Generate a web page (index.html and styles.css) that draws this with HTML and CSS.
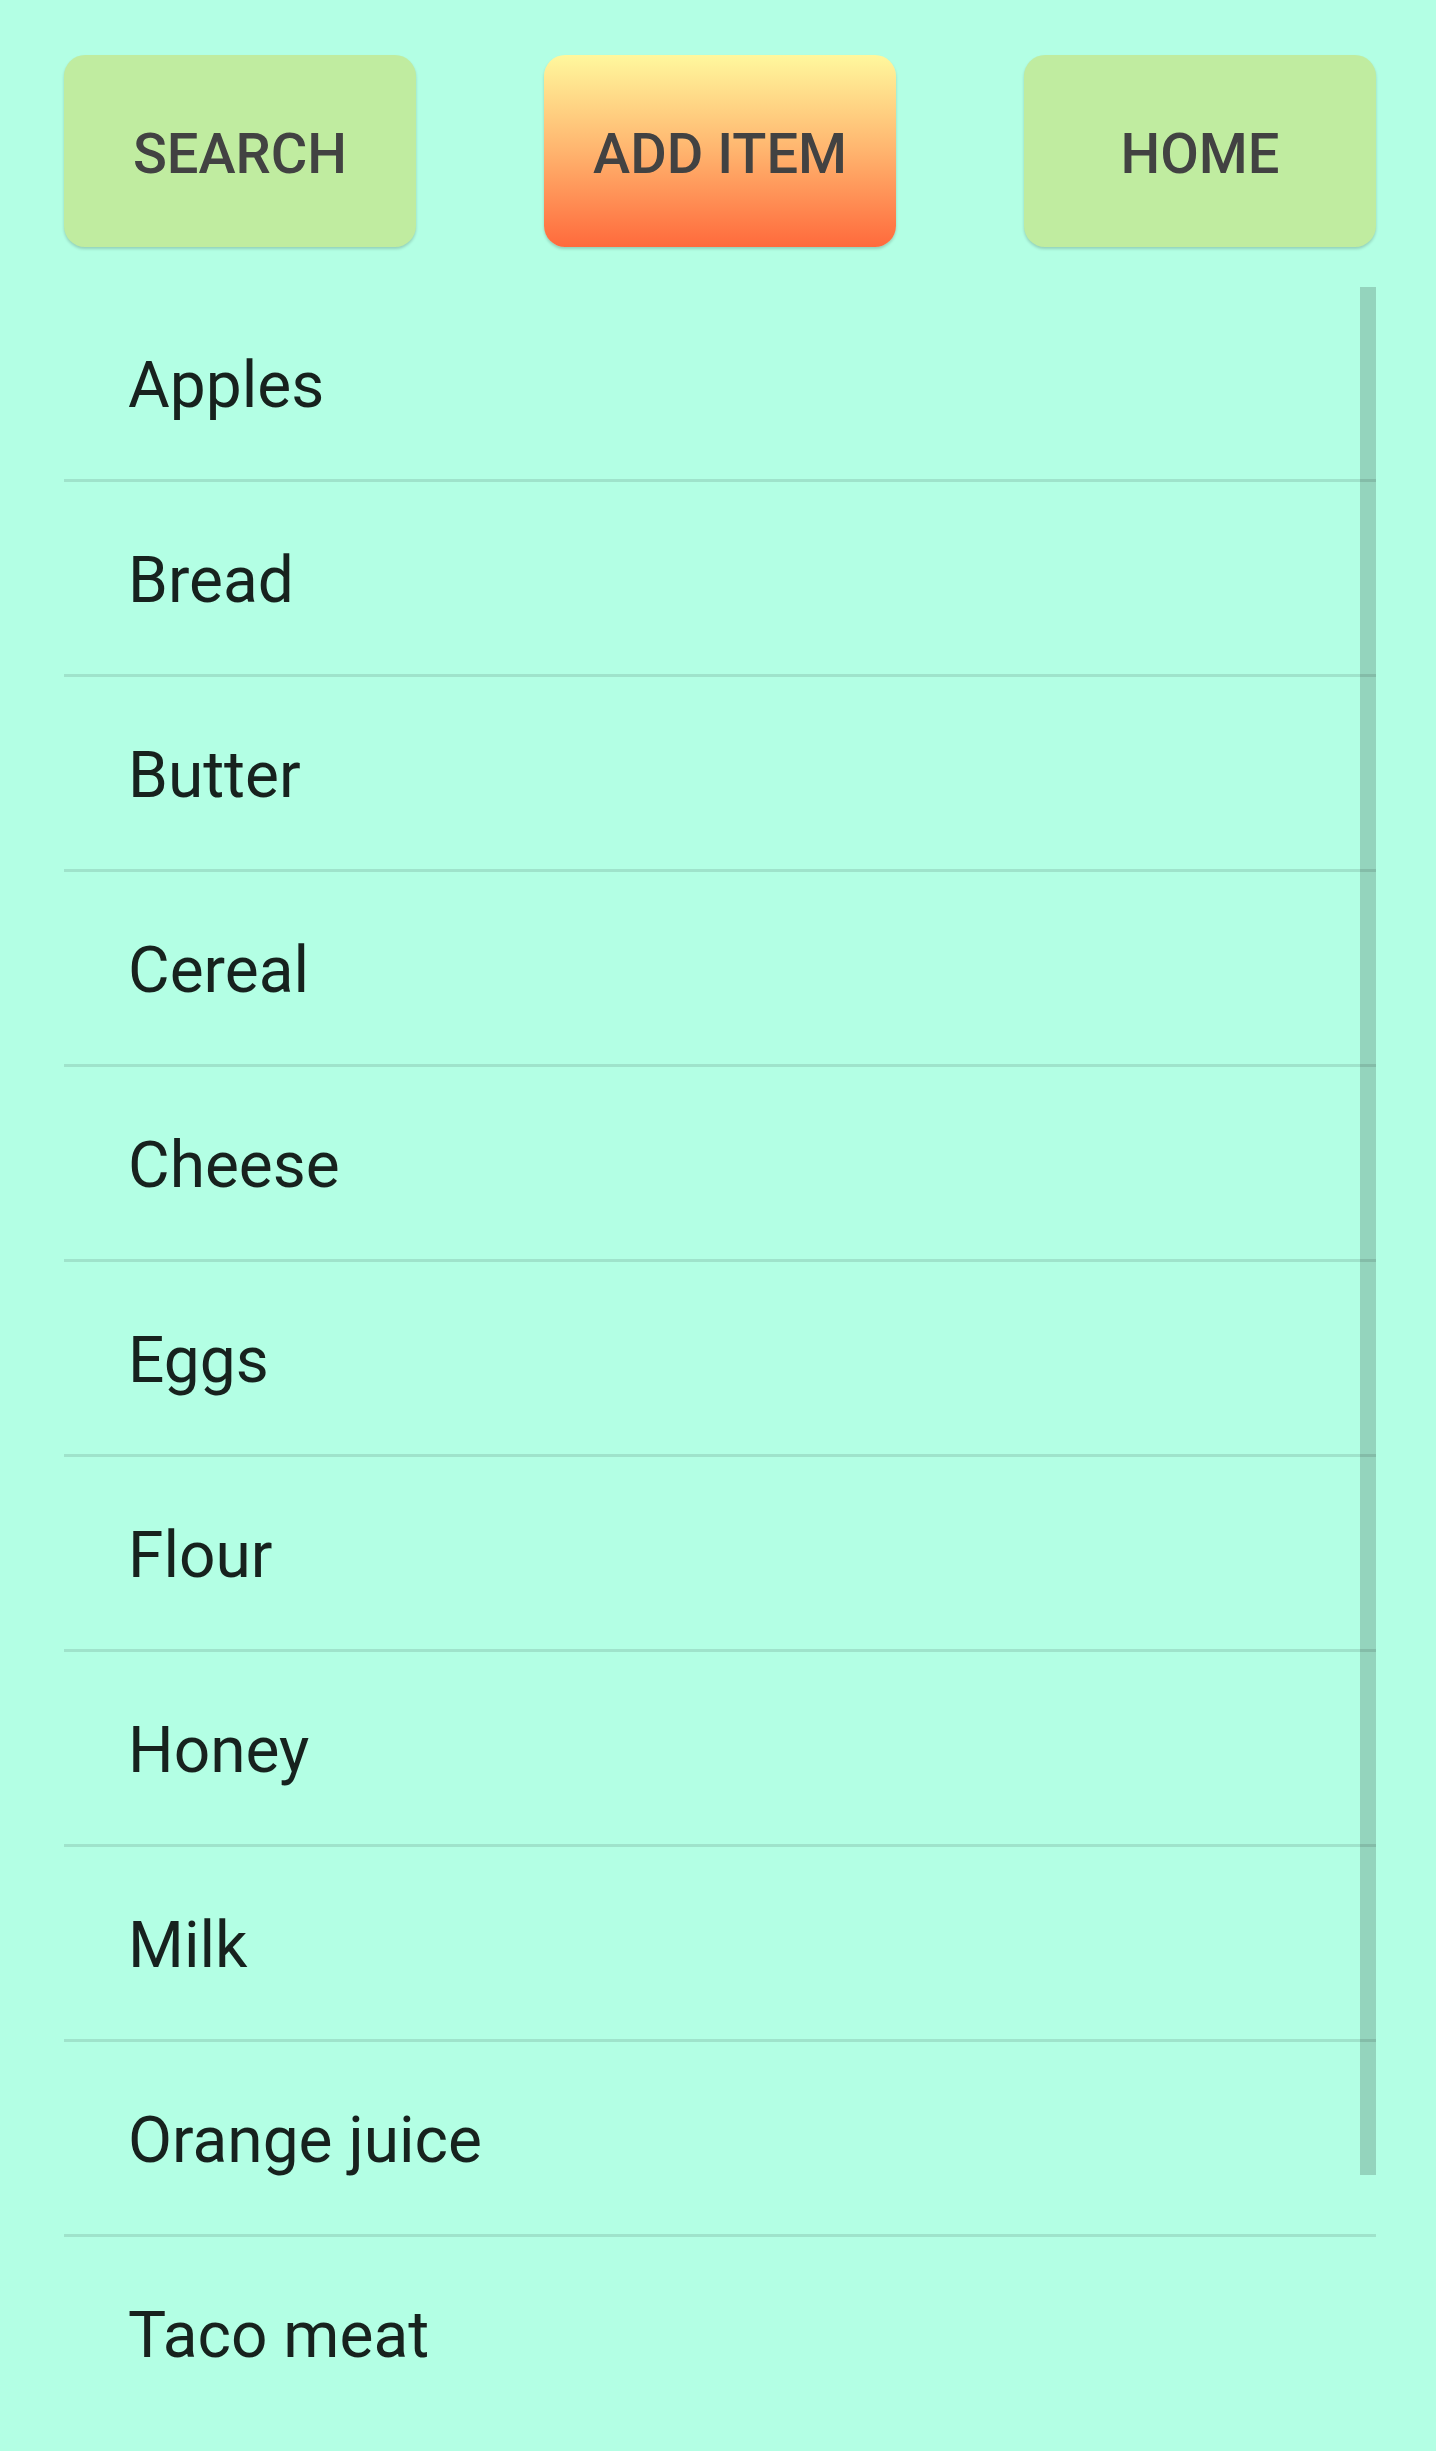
FILE: index.html
```html
<!DOCTYPE html>
<html>
<head>
<meta charset="utf-8">
<link rel="stylesheet" href="styles.css">
</head>
<body>
<div class="app">
  <div class="toolbar">
    <button class="btn btn-green">SEARCH</button>
    <button class="btn btn-orange">ADD ITEM</button>
    <button class="btn btn-green">HOME</button>
  </div>
  <div class="list">
    <div class="item">Apples</div>
    <div class="item">Bread</div>
    <div class="item">Butter</div>
    <div class="item">Cereal</div>
    <div class="item">Cheese</div>
    <div class="item">Eggs</div>
    <div class="item">Flour</div>
    <div class="item">Honey</div>
    <div class="item">Milk</div>
    <div class="item">Orange juice</div>
    <div class="item last">Taco meat</div>
    <div class="scrollbar"></div>
  </div>
</div>
</body>
</html>
```

FILE: styles.css
```css
html, body {
  margin: 0;
  padding: 0;
  background: #ffffff;
}
.app {
  background: #b3ffe4;
  height: 2451px;
  padding: 55px 60px 0 64px;
  box-sizing: border-box;
  font-family: Roboto, "Liberation Sans", sans-serif;
}
.toolbar {
  display: flex;
  justify-content: space-between;
}
.btn {
  width: 352px;
  height: 192px;
  border: none;
  border-radius: 21px;
  font-family: Roboto, "Liberation Sans", sans-serif;
  font-weight: 500;
  font-size: 56px;
  letter-spacing: 0;
  color: #424242;
  box-shadow: 0 2px 3px rgba(0, 0, 0, 0.18);
  padding: 6px 0 0 0;
}
.btn-green {
  background: #c0eca0;
}
.btn-orange {
  background: linear-gradient(180deg, #fff89d 0%, #ffb46e 50%, #ff6a3c 100%);
}
.list {
  position: relative;
  margin-top: 40px;
}
.item {
  height: 192px;
  box-sizing: border-box;
  padding-top: 4px;
  border-bottom: 3px solid rgba(0, 0, 0, 0.11);
  display: flex;
  align-items: center;
  padding-left: 64px;
  font-size: 64px;
  color: #17221e;
}
.item {
  height: 195px;
}
.item.last {
  border-bottom: none;
  height: 192px;
}
.scrollbar {
  position: absolute;
  top: 0;
  right: 0;
  width: 16px;
  height: 1888px;
  background: rgba(0, 0, 0, 0.17);
}
```
